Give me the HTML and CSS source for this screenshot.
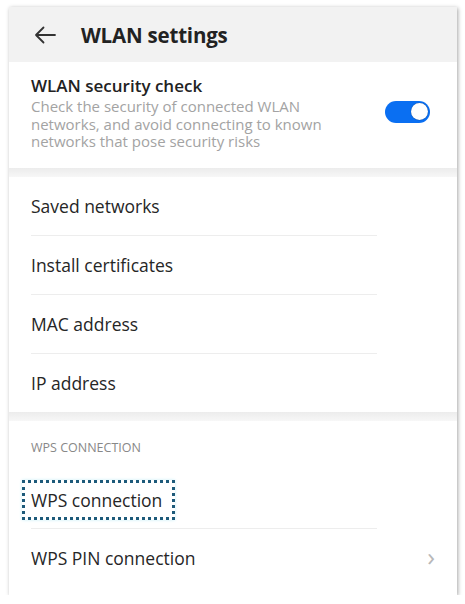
FILE: index.html
```html
<!DOCTYPE html>
<html lang="en">
<head>
    <meta charset="UTF-8">
    <meta name="viewport" content="width=device-width, initial-scale=1.0">
    <title>WLAN settings</title>
    <link rel="stylesheet" href="styles.css">
</head>
<body>
    <div class="screen">
        <header class="topbar">
            <svg class="back" width="24" height="20" viewBox="0 0 24 20">
                <path d="M22 10H3M10.5 2.5L3 10l7.5 7.5" fill="none" stroke="#333" stroke-width="1.8" stroke-linecap="round" stroke-linejoin="round"/>
            </svg>
            <h1>WLAN settings</h1>
        </header>

        <section class="group">
            <div class="check">
                <div class="check-text">
                    <div class="check-title">WLAN security check</div>
                    <div class="check-desc">Check the security of connected WLAN networks, and avoid connecting to known networks that pose security risks</div>
                </div>
                <div class="toggle on"><span class="knob"></span></div>
            </div>
        </section>

        <div class="band"></div>

        <section class="group">
            <div class="row">Saved networks</div>
            <div class="row">Install certificates</div>
            <div class="row">MAC address</div>
            <div class="row last">IP address</div>
        </section>

        <div class="band"></div>

        <section class="group wps">
            <div class="group-label">WPS CONNECTION</div>
            <div class="row"><span class="marked">WPS connection</span></div>
            <div class="row last">
                <span>WPS PIN connection</span>
                <span class="chevron">&#8250;</span>
            </div>
        </section>
    </div>
</body>
</html>
```

FILE: styles.css
```css
body {
    margin: 0;
    background-color: #fff;
    font-family: "Open Sans", Roboto, Arial, sans-serif;
    color: #222;
}
.screen {
    margin: 7px 8px 0 9px;
    height: 588px;
    background-color: #fff;
    box-shadow: 1px 1px 4px rgba(0, 0, 0, 0.35);
    display: flex;
    flex-direction: column;
}
.topbar {
    height: 55px;
    background-color: #f2f2f2;
    display: flex;
    align-items: center;
    padding-left: 24px;
}
.back {
    margin-right: 24px;
}
.topbar h1 {
    margin: 0;
    font-size: 20.5px;
    font-weight: 700;
    color: #222;
    letter-spacing: -0.2px;
}
.group {
    background-color: #fff;
    padding: 0 22px;
}
.check {
    height: 106px;
    display: flex;
    align-items: center;
    justify-content: space-between;
}
.check-text {
    width: 310px;
    margin-top: -4px;
}
.check-title {
    font-size: 17px;
    font-weight: 600;
    color: #222;
    line-height: 22px;
    margin-bottom: 1px;
}
.check-desc {
    font-size: 15px;
    line-height: 17.5px;
    color: #a3a3a3;
}
.toggle {
    width: 45px;
    height: 22px;
    border-radius: 11px;
    background-color: #0a6ff2;
    position: relative;
    margin-right: 5px;
    margin-top: -6px;
}
.knob {
    position: absolute;
    right: 2px;
    top: 2px;
    width: 17px;
    height: 17px;
    border-radius: 50%;
    background-color: #fff;
    box-shadow: 0 0 1px rgba(0, 0, 0, 0.6);
}
.band {
    height: 9px;
    background: linear-gradient(#ececec, #f7f7f7);
}
.row {
    height: 58px;
    display: flex;
    align-items: center;
    justify-content: space-between;
    font-size: 17.5px;
    color: #262626;
    border-bottom: 1px solid #ededed;
    margin-right: 58px;
}
.row.last {
    border-bottom: none;
    margin-right: 0;
}
.wps .group-label {
    height: 48px;
    display: flex;
    align-items: center;
    font-size: 12.5px;
    color: #888;
    padding-top: 2px;
}
.wps .row {
    height: 57px;
}
.marked {
    margin-left: -9px;
    padding: 5px 10px 5px 6px;
    border: 3px dotted #1d5a7a;
    box-shadow: 0 0 3px #c9eef8;
}
.chevron {
    font-size: 26px;
    color: #b8b8b8;
    margin-right: 0;
    margin-top: -3px;
}
```
